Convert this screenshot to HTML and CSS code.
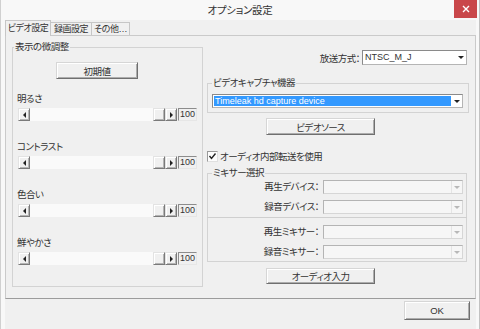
FILE: index.html
```html
<!DOCTYPE html>
<html lang="ja">
<head>
    <meta charset="UTF-8">
    <title>オプション設定</title>
    <link rel="stylesheet" href="styles.css">
</head>
<body>
<div class="window">
    <div class="titlebar">
        <span></span>
        <span class="titlebar__text">オプション設定</span>
        <span class="titlebar__close">
            <svg width="8" height="8" viewBox="0 0 8 8"><path d="M1 1L7 7M7 1L1 7" stroke="#fff" stroke-width="1.4"/></svg>
        </span>
    </div>
    <div class="client">
        <div class="tabs">
            <span class="tab tab--video is-active">ビデオ設定</span>
            <span class="tab tab--rec">録画設定</span>
            <span class="tab tab--other">その他…</span>
        </div>
        <div class="panel">
            <fieldset class="group group--adjust">
                <legend>表示の微調整</legend>
                <button class="btn btn--reset">初期値</button>
                <div class="sliders">
                    <div class="slider">
                        <div class="slider__label">明るさ</div>
                        <div class="slider__row">
                            <span class="scroll"><span class="scroll__btn scroll__btn--left"></span><span class="scroll__track"></span><span class="scroll__btn"></span><span class="scroll__btn scroll__btn--right"></span></span>
                            <span class="edit">100</span>
                        </div>
                    </div>
                    <div class="slider">
                        <div class="slider__label">コントラスト</div>
                        <div class="slider__row">
                            <span class="scroll"><span class="scroll__btn scroll__btn--left"></span><span class="scroll__track"></span><span class="scroll__btn"></span><span class="scroll__btn scroll__btn--right"></span></span>
                            <span class="edit">100</span>
                        </div>
                    </div>
                    <div class="slider">
                        <div class="slider__label">色合い</div>
                        <div class="slider__row">
                            <span class="scroll"><span class="scroll__btn scroll__btn--left"></span><span class="scroll__track"></span><span class="scroll__btn"></span><span class="scroll__btn scroll__btn--right"></span></span>
                            <span class="edit">100</span>
                        </div>
                    </div>
                    <div class="slider">
                        <div class="slider__label">鮮やかさ</div>
                        <div class="slider__row">
                            <span class="scroll"><span class="scroll__btn scroll__btn--left"></span><span class="scroll__track"></span><span class="scroll__btn"></span><span class="scroll__btn scroll__btn--right"></span></span>
                            <span class="edit">100</span>
                        </div>
                    </div>
                </div>
            </fieldset>

            <div class="side">
                <div class="broadcast">
                    <span>放送方式：</span>
                    <span class="combo combo--broadcast"><span class="combo__text">NTSC_M_J</span><span class="combo__arrow"></span></span>
                </div>

                <fieldset class="group group--capture">
                    <legend>ビデオキャプチャ機器</legend>
                    <span class="combo combo--capture"><span class="combo__text combo__text--selected">Timeleak hd capture device</span><span class="combo__arrow"></span></span>
                </fieldset>

                <button class="btn btn--side btn--source">ビデオソース</button>

                <div class="check-row">
                    <span class="check">
                        <svg width="9" height="9" viewBox="0 0 9 9"><path d="M1.5 4L3.5 6.5L7.5 1.5" fill="none" stroke="#222" stroke-width="1.4"/></svg>
                    </span>
                    <span>オーディオ内部転送を使用</span>
                </div>

                <fieldset class="group group--mixer">
                    <legend>ミキサー選択</legend>
                    <div class="mix-row">
                        <span class="mix-row__label">再生デバイス：</span>
                        <span class="combo combo--disabled"><span class="combo__text"></span><span class="combo__arrow"></span></span>
                    </div>
                    <div class="mix-row">
                        <span class="mix-row__label">録音デバイス：</span>
                        <span class="combo combo--disabled"><span class="combo__text"></span><span class="combo__arrow"></span></span>
                    </div>
                    <div class="mix-divider"></div>
                    <div class="mix-row mix-row--first">
                        <span class="mix-row__label">再生ミキサー：</span>
                        <span class="combo combo--disabled"><span class="combo__text"></span><span class="combo__arrow"></span></span>
                    </div>
                    <div class="mix-row">
                        <span class="mix-row__label">録音ミキサー：</span>
                        <span class="combo combo--disabled"><span class="combo__text"></span><span class="combo__arrow"></span></span>
                    </div>
                </fieldset>

                <button class="btn btn--side btn--audio">オーディオ入力</button>
            </div>
        </div>
        <div class="footer">
            <button class="btn btn--ok">OK</button>
        </div>
    </div>
</div>
</body>
</html>
```

FILE: styles.css
```css
* {
    box-sizing: border-box;
}
body {
    margin: 0;
    font-family: "Liberation Sans", "Noto Sans CJK JP", sans-serif;
    font-size: 9.5px;
    letter-spacing: -0.5px;
    color: #333;
    font-feature-settings: "palt";
}
.window {
    width: 480px;
    height: 329px;
    background: #f8f8f8;
    border-left: 1px solid #d0d0d0;
    border-right: 1px solid #c2c2c2;
    padding: 0 3px 0 4px;
    display: flex;
    flex-direction: column;
}

/* title bar */
.titlebar {
    height: 20px;
    margin: 0 -3px 0 -4px;
    display: grid;
    grid-template-columns: 1fr auto 1fr;
    align-items: start;
}
.titlebar__text {
    font-size: 10.5px;
    line-height: 20px;
    letter-spacing: -0.3px;
    color: #333;
}
.titlebar__close {
    justify-self: end;
    margin-right: 2px;
    width: 23px;
    height: 18px;
    background: #c9474a;
    display: flex;
    align-items: center;
    justify-content: center;
}

.client {
    flex: 1;
    background: #f0f0f0;
    display: flex;
    flex-direction: column;
}

/* tabs */
.tabs {
    height: 15px;
    display: flex;
    align-items: flex-end;
}
.tab {
    height: 13px;
    border: 1px solid #c6c6c6;
    border-bottom: 0;
    font-size: 9px;
    line-height: 12px;
    text-align: center;
    white-space: nowrap;
    background: #f0f0f0;
    margin-left: -1px;
}
.tab.is-active {
    position: relative;
    z-index: 1;
    height: 16px;
    margin-bottom: -1px;
    margin-left: 0;
    line-height: 14px;
}
.tab--video {
    width: 46px;
}
.tab--rec {
    width: 42px;
}
.tab--other {
    width: 39px;
}

/* tab page */
.panel {
    height: 264px;
    border: 1px solid #cacaca;
    border-bottom-color: #9c9c9c;
    padding: 5px 6px 0 6px;
    display: grid;
    grid-template-columns: 191px 262px;
    column-gap: 4px;
    align-items: start;
}

.group {
    margin: 0;
    padding: 0;
    min-inline-size: 0;
    border: 1px solid #d3d3d3;
}
.group legend {
    padding: 0 1px;
    line-height: 12px;
}

.group--adjust {
    height: 246px;
}
.group--adjust legend {
    margin-left: 1px;
}

/* buttons */
.btn {
    display: block;
    padding: 0;
    font: inherit;
    letter-spacing: inherit;
    font-feature-settings: "palt";
    color: #333;
    background: #f0f0f0;
    border: 1px solid;
    border-color: #d6d6d6 #6f6f6f #6f6f6f #d6d6d6;
    box-shadow: inset 1px 1px #fff, inset -1px -1px #adadad;
}
.btn--reset {
    margin: 9px 0 14px 43px;
    width: 82px;
    height: 17px;
}

/* sliders */
.sliders {
    display: flex;
    flex-direction: column;
    gap: 20px;
}
.slider__label {
    padding-left: 4px;
    height: 12px;
    line-height: 12px;
}
.slider__row {
    display: flex;
    height: 13px;
    margin: 3px 0 0 5px;
}
.scroll {
    width: 159px;
    display: flex;
}
.scroll__track {
    flex: 1;
    background: #fafafa;
}
.scroll__btn {
    width: 12px;
    height: 13px;
    background: #f0f0f0;
    border: 1px solid;
    border-color: #e3e3e3 #7a7a7a #7a7a7a #e3e3e3;
    box-shadow: inset 1px 1px #fff, inset -1px -1px #b4b4b4;
    display: flex;
    align-items: center;
    justify-content: center;
}
.scroll__btn--left::before {
    content: "";
    border-style: solid;
    border-width: 3px 3px 3px 0;
    border-color: transparent #222 transparent transparent;
}
.scroll__btn--right::before {
    content: "";
    border-style: solid;
    border-width: 3px 0 3px 3px;
    border-color: transparent transparent transparent #222;
}
.edit {
    width: 19px;
    height: 13px;
    margin-left: 1px;
    border: 1px solid;
    border-color: #8c8c8c #e6e6e6 #e6e6e6 #8c8c8c;
    font-size: 9px;
    letter-spacing: 0;
    line-height: 11px;
    padding-left: 1px;
}

/* right side */
.side {
    display: flex;
    flex-direction: column;
    align-items: stretch;
}
.broadcast {
    margin-top: 9px;
    height: 15px;
    padding-right: 2px;
    display: flex;
    justify-content: flex-end;
    align-items: center;
    gap: 2px;
}

.combo {
    display: flex;
    height: 15px;
    background: #fff;
    border: 1px solid;
    border-color: #8a8a8a #b5b5b5 #b5b5b5 #8a8a8a;
}
.combo__text {
    flex: 1;
    padding-left: 2px;
    font-size: 9px;
    letter-spacing: 0;
    line-height: 13px;
    white-space: nowrap;
    overflow: hidden;
}
.combo__arrow {
    width: 11px;
    display: flex;
    align-items: center;
    justify-content: center;
}
.combo__arrow::before {
    content: "";
    border-style: solid;
    border-width: 3px 3px 0 3px;
    border-color: #222 transparent transparent transparent;
}
.combo--broadcast {
    width: 105px;
}
.combo--capture {
    height: 14px;
    margin: 5px 0 0 0;
    padding: 1px 0 1px 1px;
}
.combo__text--selected {
    background: #3399ff;
    color: #fff;
    line-height: 10px;
    padding-left: 1px;
}
.combo--disabled {
    height: 14px;
    background: #f6f6f6;
    border-color: #b4b4b4 #d6d6d6 #d6d6d6 #b4b4b4;
}
.combo--disabled .combo__arrow {
    border-left: 1px solid #e4e4e4;
}
.combo--disabled .combo__arrow::before {
    border-color: #b8b8b8 transparent transparent transparent;
}

.group--capture {
    margin-top: 12px;
    height: 36px;
    padding: 0 5px 4px 4px;
}

.btn--side {
    width: 109px;
    margin-left: 59px;
}
.btn--source {
    height: 17px;
    margin-top: 5px;
}
.btn--audio {
    height: 16px;
    margin-top: 6px;
}

.check-row {
    margin-top: 15px;
    height: 12px;
    display: flex;
    align-items: center;
    gap: 2px;
}
.check {
    width: 11px;
    height: 11px;
    background: #fdfdfd;
    border: 1px solid;
    border-color: #9a9a9a #e0e0e0 #e0e0e0 #9a9a9a;
    display: flex;
    align-items: center;
    justify-content: center;
}

.group--mixer {
    margin: 5px 2px 0 0;
    padding: 0 3px 2px 0;
}
.group--mixer legend {
    margin-left: 4px;
}
.mix-row {
    display: grid;
    grid-template-columns: 1fr 140px;
    column-gap: 4px;
    align-items: center;
    height: 14px;
    margin-top: 6px;
}
.group--mixer legend + .mix-row {
    margin-top: 1px;
}
.mix-row--first.mix-row {
    margin-top: 7px;
}
.mix-row__label {
    text-align: right;
    line-height: 12px;
}
.mix-divider {
    height: 1px;
    margin: 3px -4px 0 -1px;
    background: #cfcfcf;
}

/* footer */
.footer {
    flex: 1;
    display: flex;
    justify-content: flex-end;
    align-items: flex-start;
    padding: 2px 6px 0 0;
}
.btn--ok {
    width: 66px;
    height: 19px;
    font-size: 9.5px;
    letter-spacing: 0;
}
```
